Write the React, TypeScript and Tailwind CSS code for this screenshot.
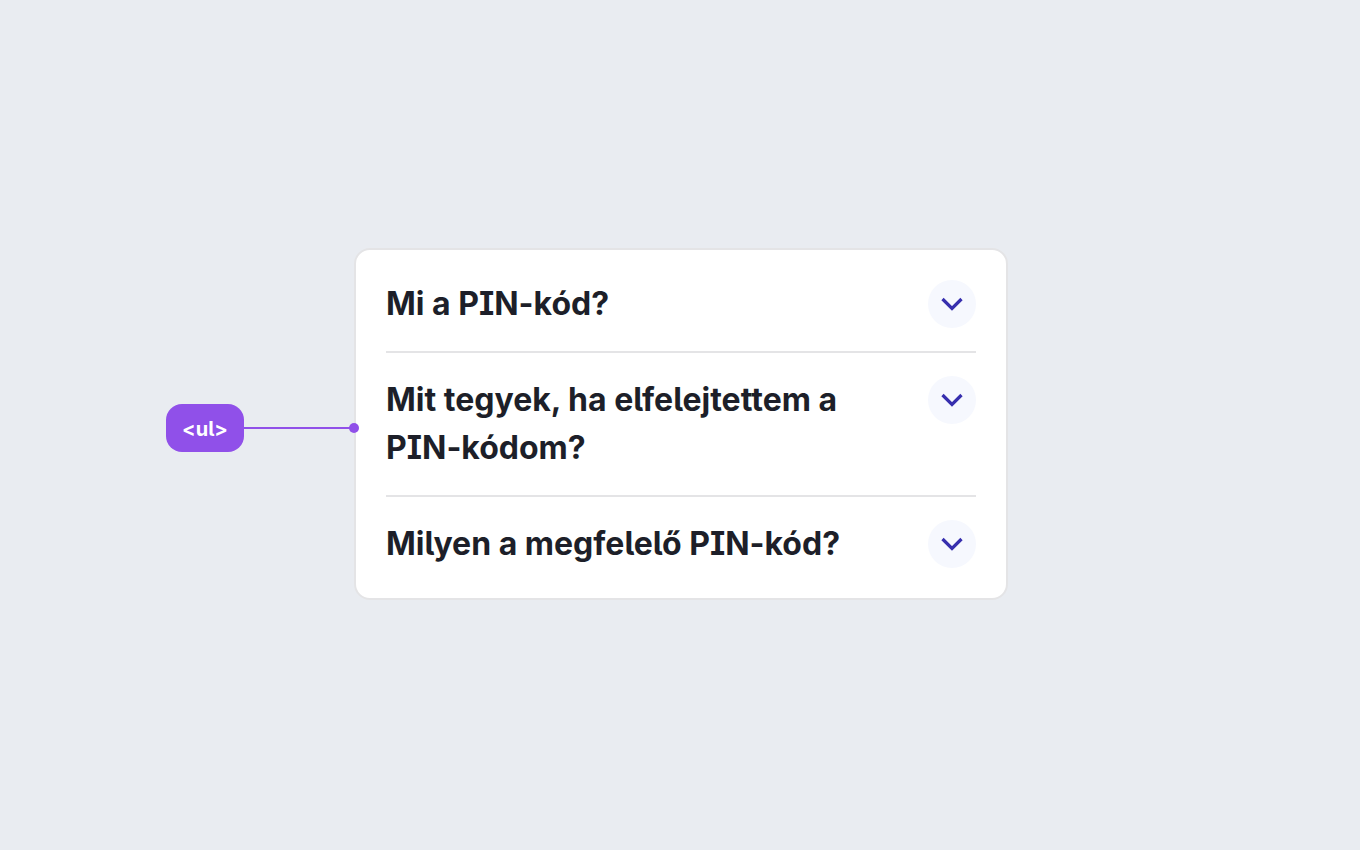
import { useState } from 'react';

const QUESTIONS = [
  'Mi a PIN-kód?',
  'Mit tegyek, ha elfelejtettem a PIN-kódom?',
  'Milyen a megfelelő PIN-kód?',
] as const;

function Chevron({ open }: { open: boolean }) {
  return (
    <span className="flex size-12 shrink-0 items-center justify-center rounded-full bg-[#f6f8fe]">
      <svg
        viewBox="0 0 24 24"
        className={open ? 'size-6 rotate-180' : 'size-6'}
        fill="none"
        stroke="#372fae"
        strokeWidth="3.2"
        aria-hidden="true"
      >
        <path d="M2.5 7 12 16.5 21.5 7" />
      </svg>
    </span>
  );
}

function QuestionList() {
  const [openIndex, setOpenIndex] = useState<number | null>(null);

  return (
    <ul className="rounded-2xl border-2 border-[#e4e4e6] bg-white p-[30px]">
      {QUESTIONS.map((question, index) => (
        <li
          key={question}
          className="border-b-2 border-[#e4e4e6] py-[23px] first:pt-0 last:border-b-0 last:pb-0"
        >
          <button
            type="button"
            aria-expanded={openIndex === index}
            onClick={() => setOpenIndex(openIndex === index ? null : index)}
            className="flex w-full cursor-pointer items-start justify-between gap-8 text-left text-[32px] leading-12 font-bold text-[#1d1f29]"
          >
            <span>{question}</span>
            <Chevron open={openIndex === index} />
          </button>
        </li>
      ))}
    </ul>
  );
}

// Tag label with a connector line that ends in a dot on the list's edge
function TagMarker({ tag }: { tag: string }) {
  return (
    <div className="flex items-center justify-end pt-2">
      <code className="flex h-12 w-[78px] items-center justify-center rounded-2xl bg-[#9050e9] pt-0.5 font-['Inter',sans-serif] text-xl font-bold text-white [font-feature-settings:'ss02']">
        {tag}
      </code>
      <span className="relative h-0.5 w-[110px] bg-[#9050e9]">
        <span className="absolute -top-1 -right-[5px] z-10 size-2.5 rounded-full bg-[#9050e9]" />
      </span>
    </div>
  );
}

export default function App() {
  return (
    <main className="grid min-h-screen grid-cols-[1fr_minmax(0,654px)_1fr] content-center bg-[#e9ecf1] pb-0.5 pl-0.5 font-['Inter',sans-serif] [font-feature-settings:'ss02']">
      <TagMarker tag="<ul>" />
      <QuestionList />
    </main>
  );
}
